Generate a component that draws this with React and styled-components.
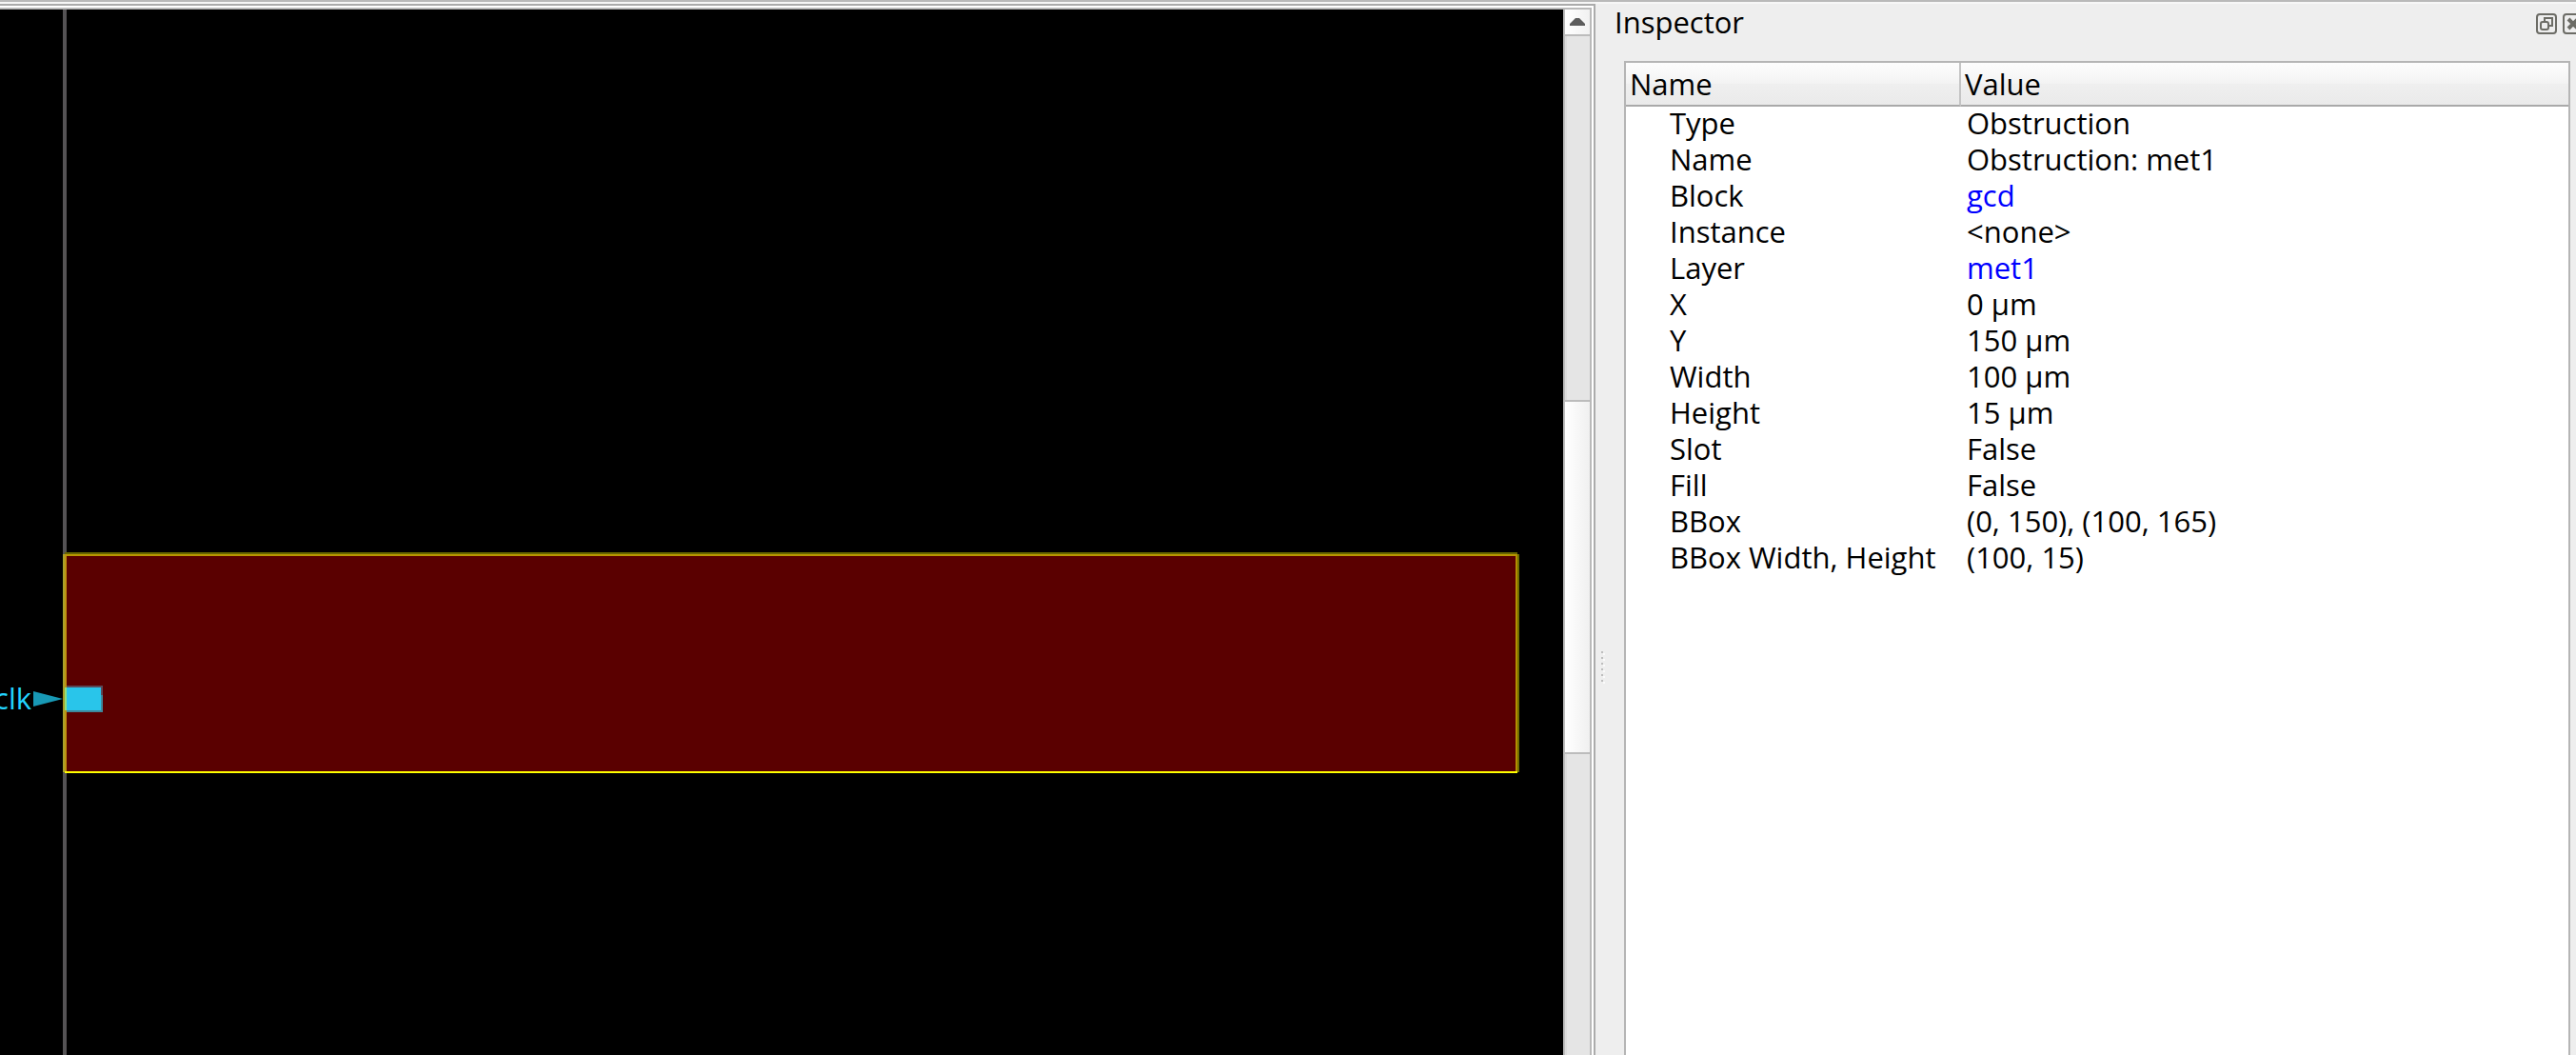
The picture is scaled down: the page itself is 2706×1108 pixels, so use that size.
import React from 'react';
import styled, { createGlobalStyle } from 'styled-components';

const GlobalStyle = createGlobalStyle`
  * { box-sizing: border-box; }
  body {
    margin: 0;
    background: #eeeeee;
    color: #000;
    font: 31px/38px "Open Sans", "Noto Sans", sans-serif;
    overflow: hidden;
  }
`;

const Window = styled.div`
  display: grid;
  grid-template-columns: minmax(0, 1fr) 18px 1012px;
  height: 100vh;
  border-top: 2px solid #b9b9b9;
  box-shadow: inset 0 2px #f6f6f6;
  padding-top: 2px;
  overflow: hidden;
`;

const Viewer = styled.main`
  display: flex;
  min-width: 0;
  border: solid #ababab;
  border-width: 2px 2px 0 0;
  background: #fff;
  padding: 2px 2px 0 0;
`;

const ViewerFrame = styled.div`
  display: flex;
  flex: 1;
  min-width: 0;
  border: solid #b9b9b9;
  border-width: 2px 2px 0 0;
`;

const Canvas = styled.svg`
  flex: 1;
  min-width: 0;
  height: 100%;
  background: #000;
  font-size: 31px;
`;

const ScrollBar = styled.div`
  display: grid;
  grid-template-rows: 28px 382fr 372fr 316fr;
  width: 28px;
  border-left: 2px solid #bcbcbc;
`;

const ScrollButton = styled.button`
  display: flex;
  align-items: center;
  justify-content: center;
  padding: 0;
  border: 0;
  border-bottom: 2px solid #bcbcbc;
  background: linear-gradient(to right, #fff, #f1f1f1);
`;

const Groove = styled.div`
  background: #e5e5e5;
  box-shadow: inset 2px 0 #dcdcdc;
`;

const Thumb = styled.div`
  border: solid #bcbcbc;
  border-width: 2px 0;
  background: linear-gradient(to right, #fff, #f0f0f0);
`;

const Splitter = styled.div`
  display: flex;
  flex-direction: column;
  gap: 4px;
  padding: 680px 0 0 6px;
`;

const Dot = styled.span`
  width: 2px;
  height: 2px;
  background: #bdbdbd;
  box-shadow: 2px 2px #fafafa;
`;

const Dock = styled.aside`
  display: flex;
  flex-direction: column;
  min-width: 0;
`;

const TitleBar = styled.header`
  display: flex;
  justify-content: space-between;
  height: 60px;
`;

const Title = styled.h1`
  margin: 0;
  font-size: 31px;
  font-weight: 400;
  line-height: 38px;
  padding-left: 2px;
`;

const TitleButtons = styled.div`
  display: flex;
  flex: none;
  gap: 6px;
  width: 42px;
  padding-top: 10px;
`;

const TitleButton = styled.button`
  flex: none;
  width: 22px;
  height: 22px;
  padding: 0;
  border: 0;
  background: none;
  svg { display: block; }
`;

const TreeView = styled.section`
  flex: 1;
  margin: 0 6px 0 12px;
  border: solid #b5b5b5;
  border-width: 2px 2px 0;
  background: #fff;
`;

const Table = styled.table`
  width: 100%;
  table-layout: fixed;
  border-collapse: separate;
  border-spacing: 0;
  text-align: left;
`;

const HeadCell = styled.th`
  width: ${(p) => (p.$name ? '352px' : 'auto')};
  height: 46px;
  padding: 0 4px;
  border-bottom: 2px solid #a9a9a9;
  border-right: ${(p) => (p.$name ? '2px solid #c4c4c4' : '0')};
  background: linear-gradient(#fdfdfd, #f3f3f3 50%, #efefef 51%, #eaeaea);
  font-weight: 400;
  line-height: 44px;
`;

const Cell = styled.td`
  height: 38px;
  padding: 0 0 4px ${(p) => (p.$name ? '46px' : '6px')};
  line-height: 34px;
  white-space: nowrap;
`;

const Link = styled.a`
  color: #0000ff;
  text-decoration: none;
`;

const properties = [
  { name: 'Type', value: 'Obstruction' },
  { name: 'Name', value: 'Obstruction: met1' },
  { name: 'Block', value: 'gcd', link: true },
  { name: 'Instance', value: '<none>' },
  { name: 'Layer', value: 'met1', link: true },
  { name: 'X', value: '0 µm' },
  { name: 'Y', value: '150 µm' },
  { name: 'Width', value: '100 µm' },
  { name: 'Height', value: '15 µm' },
  { name: 'Slot', value: 'False' },
  { name: 'Fill', value: 'False' },
  { name: 'BBox', value: '(0, 150), (100, 165)' },
  { name: 'BBox Width, Height', value: '(100, 15)' },
];

// Chip layout; the origin is the corner just inside the viewer frame.
function LayoutDrawing() {
  return (
    <Canvas role="img" aria-label="Layout with a met1 obstruction">
      <rect x="66" y="0" width="4" height="100%" fill="#555355" />
      <rect x="68" y="572" width="1526" height="230" fill="#5a0000" />
      <rect x="68" y="570" width="1526" height="2" fill="#666600" />
      <rect x="68" y="572" width="1526" height="2" fill="#b89600" />
      <rect x="1592" y="572" width="2" height="228" fill="#b38f00" />
      <rect x="1594" y="572" width="2" height="229" fill="#6e6e00" />
      <rect x="66" y="572" width="2" height="229" fill="#a9a12a" />
      <rect x="68" y="572" width="2" height="228" fill="#bf9110" />
      <rect x="70" y="710" width="38" height="18" fill="#5b4a58" />
      <rect x="70" y="720" width="38" height="18" fill="#40889b" />
      <rect x="70" y="712" width="36" height="24" fill="#29c5ea" />
      <rect x="68" y="712" width="2" height="24" fill="#8fe07e" />
      <rect x="68" y="800" width="1526" height="2" fill="#ffff00" />
      <path d="M35 716 L66 724 L35 732 Z" fill="#1899b5" />
      <text x="33" y="735" textAnchor="end" fill="#22d3ff">clk</text>
    </Canvas>
  );
}

function FloatIcon() {
  return (
    <svg width="22" height="22" fill="none" stroke="#6c6c66" strokeWidth="2">
      <rect x="1" y="1" width="20" height="20" rx="3" />
      <path d="M9 9V5h8v8h-4" />
      <rect x="5" y="9" width="8" height="8" rx="2" />
    </svg>
  );
}

function CloseIcon() {
  return (
    <svg width="22" height="22" fill="none" stroke="#6c6c66" strokeWidth="2">
      <rect x="1" y="1" width="20" height="20" rx="3" />
      <path d="M6 6L16 16M16 6L6 16" strokeWidth="4" />
    </svg>
  );
}

export default function App() {
  return (
    <>
      <GlobalStyle />
      <Window>
        <Viewer>
          <ViewerFrame>
            <LayoutDrawing />
            <ScrollBar>
              <ScrollButton aria-label="Scroll up">
                <svg width="16" height="8">
                  <path d="M0 8V6L6 0H10L16 6V8Z" fill="#5c5c5c" />
                </svg>
              </ScrollButton>
              <Groove />
              <Thumb />
              <Groove />
            </ScrollBar>
          </ViewerFrame>
        </Viewer>
        <Splitter>
          {[0, 1, 2, 3, 4, 5].map((n) => <Dot key={n} />)}
        </Splitter>
        <Dock>
          <TitleBar>
            <Title>Inspector</Title>
            <TitleButtons>
              <TitleButton aria-label="Float"><FloatIcon /></TitleButton>
              <TitleButton aria-label="Close"><CloseIcon /></TitleButton>
            </TitleButtons>
          </TitleBar>
          <TreeView>
            <Table>
              <thead>
                <tr>
                  <HeadCell $name>Name</HeadCell>
                  <HeadCell>Value</HeadCell>
                </tr>
              </thead>
              <tbody>
                {properties.map(({ name, value, link }) => (
                  <tr key={name}>
                    <Cell $name>{name}</Cell>
                    <Cell>{link ? <Link href={`#${value}`}>{value}</Link> : value}</Cell>
                  </tr>
                ))}
              </tbody>
            </Table>
          </TreeView>
        </Dock>
      </Window>
    </>
  );
}
